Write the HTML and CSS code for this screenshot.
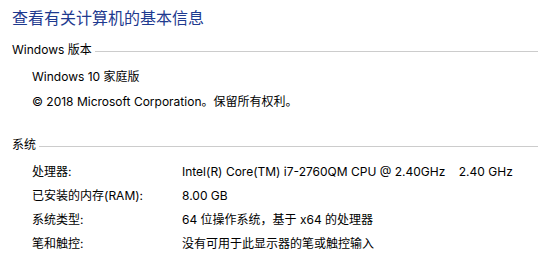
FILE: index.html
```html
<!DOCTYPE html>
<html lang="zh-CN">
<head>
<meta charset="utf-8">
<link rel="stylesheet" href="styles.css">
</head>
<body>
<div class="page">
  <h1 class="title">查看有关计算机的基本信息</h1>
  <section class="section first">
    <div class="section-head"><span class="section-label">Windows 版本</span><span class="rule"></span></div>
    <div class="edition">
      <div class="line">Windows 10 家庭版</div>
      <div class="line">© 2018 Microsoft Corporation。保留所有权利。</div>
    </div>
  </section>
  <section class="section second">
    <div class="section-head"><span class="section-label">系统</span><span class="rule"></span></div>
    <div class="rows">
      <div class="row"><span class="key">处理器:</span><span class="val">Intel(R) Core(TM) i7-2760QM CPU @ 2.40GHz&nbsp;&nbsp;&nbsp;&nbsp;2.40 GHz</span></div>
      <div class="row"><span class="key">已安装的内存(RAM):</span><span class="val">8.00 GB</span></div>
      <div class="row"><span class="key">系统类型:</span><span class="val">64 位操作系统，基于 x64 的处理器</span></div>
      <div class="row"><span class="key">笔和触控:</span><span class="val">没有可用于此显示器的笔或触控输入</span></div>
    </div>
  </section>
</div>
</body>
</html>
```
FILE: styles.css
```css
html, body {
  margin: 0;
  padding: 0;
  background: #ffffff;
}
body {
  font-family: "Inter", "Noto Sans CJK SC", sans-serif;
  font-size: 12px;
  color: #000000;
}
.page {
  padding: 6px 1px 0 12px;
}
.title {
  margin: 0;
  font-size: 16px;
  font-weight: normal;
  line-height: 22px;
  color: #1e3a8f;
  font-family: "Noto Sans CJK SC", sans-serif;
}
.section-head {
  display: flex;
  align-items: center;
  height: 20px;
  line-height: 20px;
}
.section-label {
  white-space: nowrap;
}
.rule {
  flex: 1;
  height: 1px;
  background: #cccccc;
  margin-left: 3px;
  margin-top: 3px;
}
.first {
  margin-top: 12px;
}
.edition {
  padding: 4px 0 0 20px;
}
.line {
  line-height: 25px;
  white-space: nowrap;
}
.second {
  margin-top: 21px;
}
.rows {
  padding: 5px 0 0 20px;
}
.row {
  display: flex;
  line-height: 24px;
  white-space: nowrap;
}
.key {
  width: 150px;
  flex: none;
}
.val {
  flex: none;
}
```
